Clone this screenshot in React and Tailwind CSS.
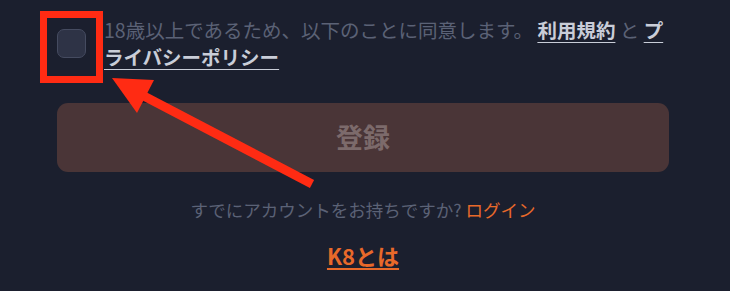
export default function App() {
  return (
    <div className="relative w-[730px] h-[291px] overflow-hidden bg-[#1b1f2e] font-['Noto_Sans_CJK_JP','Noto_Sans',sans-serif]">
      <div className="pl-[57px] pr-[61px] pt-[16px]">
        {/* Agreement */}
        <div className="flex items-center gap-[18px]">
          <div className="w-[29px] h-[29px] shrink-0 rounded-[7px] bg-[#2e3346] border border-[#454b60]" />
          <p className="text-[19.5px] leading-[27px] text-[#5b6276]">
            18歳以上であるため、以下のことに同意します。{' '}
            <a className="font-bold text-[#c9cdd8] underline underline-offset-4 decoration-1">利用規約</a>
            {' '}と{' '}
            <a className="font-bold text-[#c9cdd8] underline underline-offset-4 decoration-1">プライバシーポリシー</a>
          </p>
        </div>

        {/* Submit */}
        <button className="mt-[33px] w-full h-[69px] rounded-[11px] bg-[#4a3537] text-[27px] font-bold text-[#7c6a6b]">
          登録
        </button>

        <p className="mt-[25px] text-center text-[17.5px] leading-[26px] text-[#5b6276]">
          すでにアカウントをお持ちですか? <a className="text-[#e8692a]">ログイン</a>
        </p>

        <p className="mt-[17px] text-center text-[22px] leading-[30px]">
          <a className="font-bold text-[#e8692a] underline underline-offset-[3px] decoration-2">K8とは</a>
        </p>
      </div>

      {/* annotation */}
      <div className="absolute left-[40px] top-[11px] w-[63px] h-[72px] border-[7px] border-[#ff2b13]" />
      <svg className="absolute inset-0 pointer-events-none" width="730" height="291">
        <line x1="312" y1="184" x2="140" y2="94" stroke="#ff2b13" strokeWidth="9" />
        <polygon points="112,78 154,80 137,113" fill="#ff2b13" />
      </svg>
    </div>
  )
}
